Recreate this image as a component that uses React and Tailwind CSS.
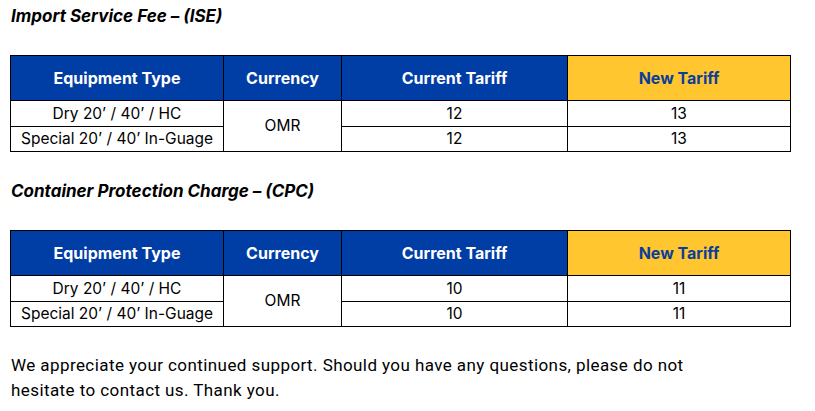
import React from "react";

function Table({ current, next }) {
  const th = "border border-black font-bold text-[16px] p-0 text-center";
  const td = "border border-black text-[15.5px] p-0 text-center font-normal";
  return (
    <table className="border-collapse table-fixed w-[780px]">
      <colgroup>
        <col className="w-[213px]" />
        <col className="w-[118px]" />
        <col className="w-[226px]" />
        <col className="w-[223px]" />
      </colgroup>
      <thead>
        <tr className="h-[45px]">
          <th className={`${th} bg-[#003da5] text-white`}>Equipment Type</th>
          <th className={`${th} bg-[#003da5] text-white`}>Currency</th>
          <th className={`${th} bg-[#003da5] text-white`}>Current Tariff</th>
          <th className={`${th} bg-[#ffc62f] text-[#0b3e9b]`}>New Tariff</th>
        </tr>
      </thead>
      <tbody>
        <tr className="h-[26px]">
          <td className={td}>Dry 20’ / 40’ / HC</td>
          <td className={td} rowSpan={2}>OMR</td>
          <td className={td}>{current}</td>
          <td className={td}>{next}</td>
        </tr>
        <tr className="h-[25px]">
          <td className={td}>Special 20’ / 40’ In-Guage</td>
          <td className={td}>{current}</td>
          <td className={td}>{next}</td>
        </tr>
      </tbody>
    </table>
  );
}

export default function App() {
  return (
    <div className="w-[815px] h-[411px] bg-white text-black pl-[10px] pt-[5px] font-['Inter',sans-serif] overflow-hidden">
      <h2 className="font-bold italic text-[17px] leading-[22px] pl-[1px]">
        Import Service Fee – (ISE)
      </h2>
      <div className="mt-[28px]">
        <Table current="12" next="13" />
      </div>
      <h2 className="font-bold italic text-[17px] leading-[22px] pl-[1px] mt-[28px]">
        Container Protection Charge – (CPC)
      </h2>
      <div className="mt-[28px]">
        <Table current="10" next="11" />
      </div>
      <p className="mt-[26px] pl-[1px] text-[17px] leading-[25px] font-['Roboto',sans-serif] tracking-[0.42px]">
        We appreciate your continued support. Should you have any questions, please do not
        <br />
        hesitate to contact us. Thank you.
      </p>
    </div>
  );
}
